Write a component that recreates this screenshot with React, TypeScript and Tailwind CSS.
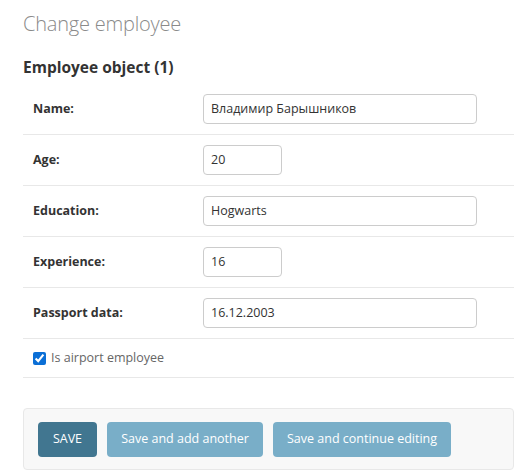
import React from "react";

const font = { fontFamily: '"Open Sans", "Noto Sans", sans-serif' };

function Row({ label, value, short }: { label: string; value: string; short?: boolean }) {
  return (
    <div className="flex items-center border-b border-[#e8e8e8] px-[10px] py-[10px]">
      <label className="w-[160px] pr-[10px] text-[12.5px] font-bold text-[#333] leading-none">{label}</label>
      <div className="pl-[10px]">
        <div
          className={`${short ? "w-[79px]" : "w-[274px]"} h-[30px] border border-[#ccc] rounded-[4px] flex items-center px-[7px] text-[12.5px] text-[#333]`}
        >
          {value}
        </div>
      </div>
    </div>
  );
}

export default function App() {
  return (
    <div className="w-[514px] h-[473px] bg-white overflow-hidden" style={font}>
      <div className="pl-[23px] pt-[10px]">
        <h1 className="text-[20px] font-light text-[#8a8a8a] leading-[28px] tracking-[-0.2px]">Change employee</h1>
        <h2 className="mt-[19px] text-[15.5px] font-bold text-[#333] leading-[20px]">Employee object (1)</h2>
        <div className="mt-[7px]">
          <Row label="Name:" value="Владимир Барышников" />
          <Row label="Age:" value="20" short />
          <Row label="Education:" value="Hogwarts" />
          <Row label="Experience:" value="16" short />
          <Row label="Passport data:" value="16.12.2003" />
          <div className="flex items-center h-[39px] border-b border-[#e8e8e8] px-[10px]">
            <input type="checkbox" defaultChecked className="w-[13px] h-[13px] m-0 accent-[#0b6fd6]" />
            <span className="ml-[5px] text-[12.5px] text-[#666]">Is airport employee</span>
          </div>
        </div>
        <div className="mt-[30px] h-[62px] bg-[#f8f8f8] border border-[#e8e8e8] rounded-[4px] flex items-center gap-[10px] pl-[14px]">
          <button className="h-[35px] w-[59px] rounded-[4px] bg-[#417690] text-white text-[12.5px]">SAVE</button>
          <button className="h-[35px] w-[156px] rounded-[4px] bg-[#79aec8] text-white text-[12.5px]">Save and add another</button>
          <button className="h-[35px] w-[178px] rounded-[4px] bg-[#79aec8] text-white text-[12.5px]">Save and continue editing</button>
        </div>
      </div>
    </div>
  );
}
